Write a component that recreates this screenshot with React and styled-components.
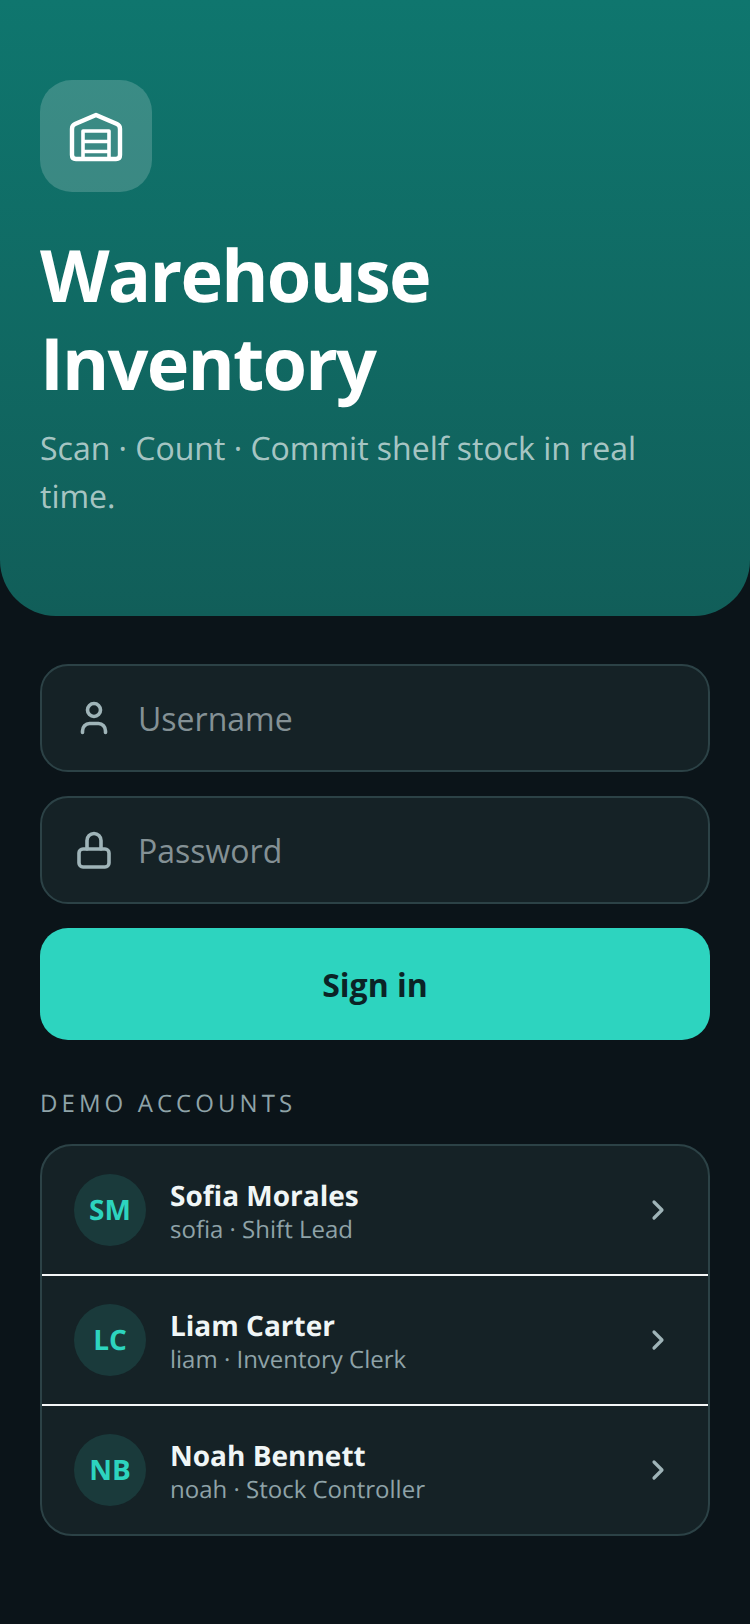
import styled, { createGlobalStyle } from "styled-components";

const accounts = [
  { initials: "SM", name: "Sofia Morales", detail: "sofia · Shift Lead" },
  { initials: "LC", name: "Liam Carter", detail: "liam · Inventory Clerk" },
  { initials: "NB", name: "Noah Bennett", detail: "noah · Stock Controller" },
];

const GlobalStyle = createGlobalStyle`
  * {
    box-sizing: border-box;
  }
  html, body {
    margin: 0;
    background: #0b1419;
  }
  body {
    font-family: "Open Sans", "Liberation Sans", sans-serif;
    text-rendering: geometricPrecision;
  }
`;

const Page = styled.div`
  width: 750px;
  min-height: 1624px;
  background: #0b1419;
`;

const Hero = styled.header`
  height: 616px;
  padding: 80px 40px 0;
  background: linear-gradient(180deg, #0f766e 0%, #115e59 100%);
  border-radius: 0 0 56px 56px;
`;

const LogoTile = styled.div`
  width: 112px;
  height: 112px;
  border-radius: 32px;
  background: rgba(255, 255, 255, 0.18);
  display: flex;
  align-items: center;
  justify-content: center;
`;

const Title = styled.h1`
  margin: 39px 0 0;
  font-size: 72px;
  line-height: 88px;
  font-weight: 700;
  color: #ffffff;
  letter-spacing: -1.8px;
`;

const Subtitle = styled.p`
  margin: 18px 0 0;
  font-size: 32px;
  line-height: 48px;
  color: rgba(255, 255, 255, 0.65);
`;

const Form = styled.main`
  padding: 48px 40px 0;
  display: flex;
  flex-direction: column;
`;

const Field = styled.label`
  height: 108px;
  margin-bottom: 24px;
  padding: 0 32px;
  display: flex;
  align-items: center;
  gap: 24px;
  background: #152226;
  border: 2px solid #2c4246;
  border-radius: 28px;
`;

const FieldIcon = styled.svg`
  width: 40px;
  height: 40px;
  flex: none;
  fill: none;
  stroke: #9fb4b8;
  stroke-width: 3.6;
  stroke-linecap: round;
  stroke-linejoin: round;
`;

const Input = styled.input`
  flex: 1;
  min-width: 0;
  border: 0;
  outline: 0;
  padding: 0;
  background: transparent;
  font-family: inherit;
  font-size: 32px;
  color: #ffffff;

  &::placeholder {
    color: #849195;
    opacity: 1;
  }
`;

const SignIn = styled.button`
  height: 112px;
  border: 0;
  border-radius: 28px;
  background: #2dd4bf;
  color: #0b2326;
  font-family: inherit;
  font-size: 32px;
  font-weight: 700;
`;

const SectionLabel = styled.h2`
  margin: 48px 0 24px;
  font-size: 24px;
  line-height: 32px;
  font-weight: 400;
  letter-spacing: 4.08px;
  color: #8fa3a8;
`;

const AccountList = styled.ul`
  list-style: none;
  margin: 0;
  padding: 0;
  background: #152226;
  border: 2px solid #2c4246;
  border-radius: 32px;
  overflow: hidden;
`;

const AccountRow = styled.li`
  box-sizing: content-box;
  height: 128px;
  padding: 0 32px;
  display: flex;
  align-items: center;
  gap: 24px;

  & + & {
    border-top: 2px solid #f4f7f7;
  }
`;

const Avatar = styled.div`
  width: 72px;
  height: 72px;
  flex: none;
  border-radius: 50%;
  background: #1a3a3b;
  color: #2dd4bf;
  display: flex;
  align-items: center;
  justify-content: center;
  font-size: 28px;
  font-weight: 700;
`;

const AccountText = styled.div`
  flex: 1;
  min-width: 0;
  padding-top: 4px;
`;

const AccountName = styled.div`
  font-size: 28px;
  line-height: 36px;
  font-weight: 700;
  color: #f0f6f6;
`;

const AccountDetail = styled.div`
  font-size: 24px;
  line-height: 32px;
  color: #8fa3a8;
`;

const Chevron = styled.svg`
  width: 36px;
  height: 36px;
  flex: none;
  fill: none;
  stroke: #9fb4b8;
  stroke-width: 3.2;
  stroke-linecap: round;
  stroke-linejoin: round;
`;

function WarehouseIcon() {
  return (
    <svg width="56" height="56" viewBox="0 0 56 56" fill="none" stroke="#fff" strokeWidth="4.400" strokeLinejoin="round">
      <path d="M4 21c0-2.500 1-4 3-4.900L28 7l21 9.100c2 .9 3 2.400 3 4.900v26c0 2.500-1.500 4-4 4H8c-2.500 0-4-1.500-4-4z" />
      <path d="M15 51V23h26v28M15 33.500h26M15 43.500h26" strokeWidth="3.600" />
    </svg>
  );
}

function App() {
  return (
    <Page>
      <GlobalStyle />
      <Hero>
        <LogoTile>
          <WarehouseIcon />
        </LogoTile>
        <Title>
          Warehouse
          <br />
          Inventory
        </Title>
        <Subtitle>Scan · Count · Commit shelf stock in real time.</Subtitle>
      </Hero>
      <Form>
        <Field>
          <FieldIcon viewBox="0 0 40 40">
            <circle cx="20" cy="12" r="6.500" />
            <path d="M8.500 34.500V33c0-4 3-7.500 7-7.500h9c4 0 7 3.500 7 7.500v1.500" />
          </FieldIcon>
          <Input placeholder="Username" />
        </Field>
        <Field>
          <FieldIcon viewBox="0 0 40 40">
            <rect x="5" y="19" width="30" height="18" rx="4" />
            <path d="M13 19v-8.500a7 7 0 0 1 14 0V19" />
          </FieldIcon>
          <Input placeholder="Password" type="password" />
        </Field>
        <SignIn>Sign in</SignIn>
        <SectionLabel>DEMO ACCOUNTS</SectionLabel>
        <AccountList>
          {accounts.map((account) => (
            <AccountRow key={account.initials}>
              <Avatar>{account.initials}</Avatar>
              <AccountText>
                <AccountName>{account.name}</AccountName>
                <AccountDetail>{account.detail}</AccountDetail>
              </AccountText>
              <Chevron viewBox="0 0 36 36">
                <path d="M14 10l8 8-8 8" />
              </Chevron>
            </AccountRow>
          ))}
        </AccountList>
      </Form>
    </Page>
  );
}

export default App;
